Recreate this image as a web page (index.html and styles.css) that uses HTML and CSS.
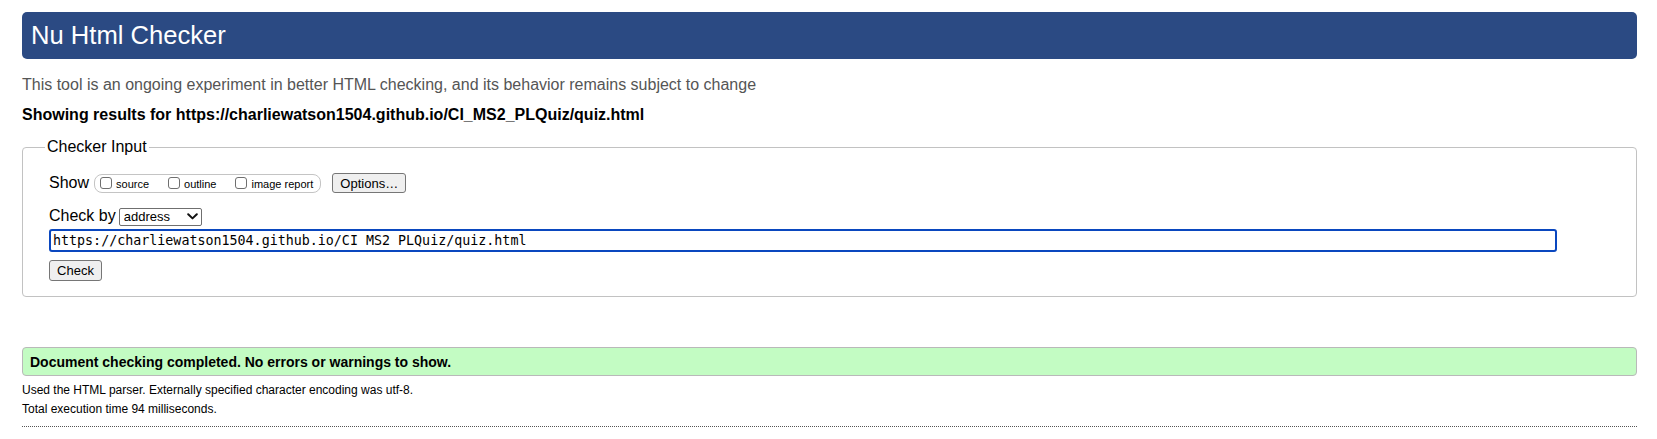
FILE: index.html
```html
<!DOCTYPE html>
<html lang="en">
<head>
<meta charset="utf-8">
<title>Nu Html Checker</title>
<link rel="stylesheet" href="styles.css">
</head>
<body>
<h1 class="title">Nu Html Checker</h1>
<p class="intro">This tool is an ongoing experiment in better HTML checking, and its behavior remains subject to change</p>
<p class="results-for">Showing results for https://charliewatson1504.github.io/CI_MS2_PLQuiz/quiz.html</p>
<form class="checker-form">
  <fieldset class="checker">
    <legend class="checker-legend">Checker Input</legend>
    <div class="show-row">
      <span class="row-label">Show</span>
      <span class="show-group">
        <label class="opt opt-source"><input type="checkbox" class="cb"><span class="opt-text">source</span></label>
        <label class="opt opt-outline"><input type="checkbox" class="cb"><span class="opt-text">outline</span></label>
        <label class="opt opt-image"><input type="checkbox" class="cb"><span class="opt-text">image report</span></label>
      </span>
      <button type="button" class="btn btn-options">Options…</button>
    </div>
    <div class="checkby-row">
      <span class="row-label">Check by</span>
      <span class="select-wrap">
        <select class="select"><option>address</option></select>
        <svg class="chevron" width="11" height="7" viewBox="0 0 11 7" aria-hidden="true"><path d="M1.2 1.2 L5.5 5.4 L9.8 1.2" fill="none" stroke="#111" stroke-width="2" stroke-linecap="round" stroke-linejoin="round"/></svg>
      </span>
    </div>
    <input class="url" type="text" value="https://charliewatson1504.github.io/CI_MS2_PLQuiz/quiz.html">
    <div class="submit-row"><button type="button" class="btn btn-check">Check</button></div>
  </fieldset>
</form>
<p class="success">Document checking completed. No errors or warnings to show.</p>
<p class="details">Used the HTML parser. Externally specified character encoding was utf-8.</p>
<p class="details">Total execution time 94 milliseconds.</p>
<hr class="divider">
</body>
</html>
```

FILE: styles.css
```css
html, body {
  background: #ffffff;
}

body {
  margin: 0;
  padding: 12px 20px 0 22px;
  font-family: "Liberation Sans", Arial, Helvetica, sans-serif;
  color: #000;
}

.title {
  margin: 0;
  height: 47px;
  line-height: 47px;
  padding-left: 9px;
  font-size: 25.6px;
  font-weight: normal;
  color: #ffffff;
  background: #2b4a83;
  border-radius: 5px;
}

.intro {
  margin: 16px 0 0;
  font-size: 16px;
  line-height: 20px;
  color: #555555;
}

.results-for {
  margin: 10px 0 0;
  font-size: 16px;
  line-height: 20px;
  font-weight: bold;
}

.checker-form {
  margin: 13px 0 0;
}

.checker {
  margin: 0;
  padding: 17px 0 15px 26px;
  border: 1px solid #c2c2c2;
  border-radius: 4px;
  min-width: 0;
}

.checker-legend {
  margin-left: -4px;
  padding: 0 2px;
  font-size: 16px;
  line-height: 18px;
}

.show-row {
  display: flex;
  align-items: center;
  height: 20px;
}

.row-label {
  font-size: 16px;
  line-height: 20px;
}

.show-group {
  display: flex;
  align-items: center;
  margin-left: 5px;
  height: 19px;
  box-sizing: border-box;
  padding: 0 7px 0 5px;
  border: 1px solid #c4c4c4;
  border-radius: 8px;
  gap: 19px;
}

.opt {
  display: flex;
  align-items: center;
  font-size: 11px;
  line-height: 13px;
}

.cb {
  appearance: none;
  -webkit-appearance: none;
  margin: 0 4px 0 0;
  width: 12px;
  height: 12px;
  box-sizing: border-box;
  border: 1px solid #6f6f6f;
  border-radius: 3px;
  background: #fff;
}

.opt-text {
  padding-top: 2px;
}

.btn {
  font-family: "Liberation Sans", Arial, Helvetica, sans-serif;
  font-size: 13px;
  color: #000;
  background: #efefef;
  border: 1px solid #767676;
  border-radius: 3px;
  padding: 0;
  box-sizing: border-box;
}

.btn-options {
  margin-left: 11px;
  width: 74px;
  height: 20px;
}

.checkby-row {
  display: flex;
  align-items: center;
  margin-top: 13px;
  height: 20px;
}

.select-wrap {
  position: relative;
  margin-left: 3px;
  display: inline-block;
  height: 18px;
}

.select {
  appearance: none;
  -webkit-appearance: none;
  width: 83px;
  height: 18px;
  box-sizing: border-box;
  margin: 0;
  padding: 0 0 0 4px;
  border: 1px solid #6f6f6f;
  border-radius: 2px;
  background: #fff;
  font-family: "Liberation Sans", Arial, Helvetica, sans-serif;
  font-size: 13px;
  line-height: 16px;
  color: #000;
}

.chevron {
  position: absolute;
  right: 4px;
  top: 6px;
}

.url {
  display: block;
  margin: 3px 0 0;
  width: 95%;
  height: 23px;
  box-sizing: border-box;
  padding: 1px 2px 2px;
  border: 2px solid #0a47bf;
  border-radius: 3px;
  outline: none;
  font-family: "DejaVu Sans Mono", "Liberation Mono", monospace;
  font-size: 13.33px;
  line-height: 16px;
  color: #000;
  background: #fff;
}

.submit-row {
  margin-top: 8px;
  display: flex;
}

.btn-check {
  width: 53px;
  height: 21px;
}

.success {
  margin: 50px 0 0;
  height: 29px;
  box-sizing: border-box;
  padding: 1px 0 0 7px;
  line-height: 26px;
  font-size: 14px;
  font-weight: bold;
  background: #c3fcc3;
  border: 1px solid #b9b9b9;
  border-radius: 4px;
}

.details {
  margin: 0;
  font-size: 12px;
  line-height: 19px;
}

.success + .details {
  margin-top: 5px;
}

.divider {
  margin: 7px 0 0;
  border: 0;
  border-top: 1px dotted #555;
  height: 0;
}
```
